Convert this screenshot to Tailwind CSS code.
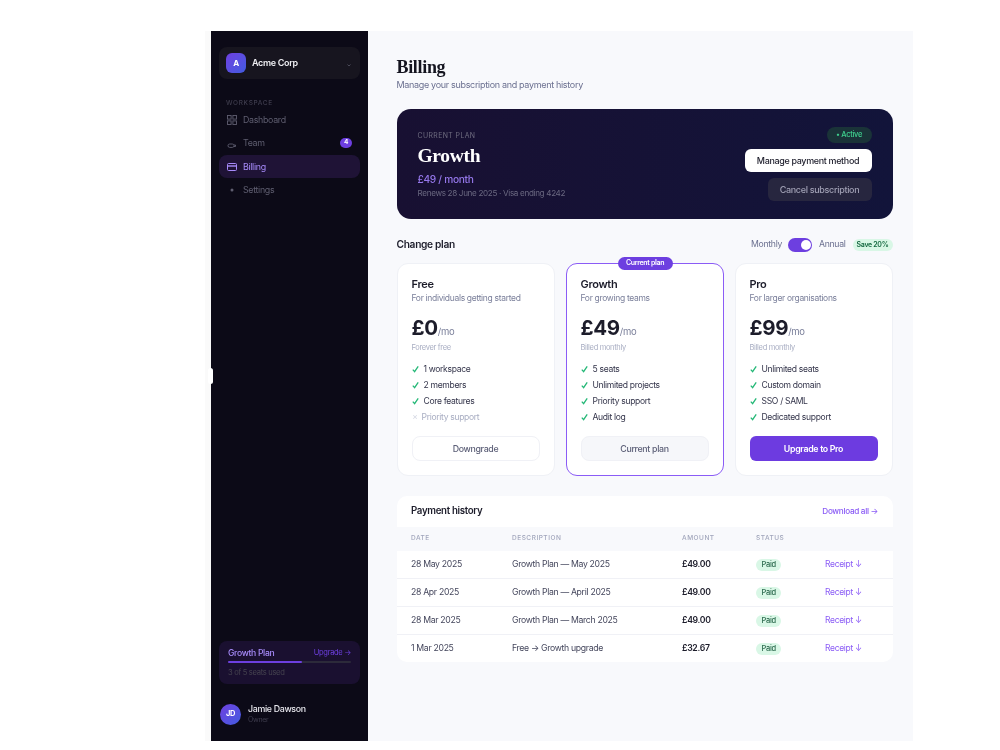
<!DOCTYPE html>
<html lang="en">
  <head>
    <meta charset="UTF-8" />
    <title>Billing</title>
    <script src="https://cdn.jsdelivr.net/npm/@tailwindcss/browser@4"></script>
  </head>
  <body class="bg-white font-['Inter',sans-serif] tracking-[-0.02em] overflow-hidden">
    <div class="w-[1000px] h-[750px] pt-[31px] pl-[205px]">
      <div class="relative flex w-[708px] h-[710px] bg-[#fafafa] pl-[6px] blur-[0.4px]">
        <div class="absolute left-[3px] top-[337px] w-[5px] h-[16px] bg-white rounded-sm"></div>

        <!-- Sidebar -->
        <aside class="w-[157px] shrink-0 bg-[#0c0a17] flex flex-col px-2 pt-4">
          <div class="h-[32px] rounded-lg bg-[#17151f] flex items-center px-[7px] gap-[6px]">
            <div class="w-[20px] h-[20px] rounded-md bg-gradient-to-br from-[#6d3fe0] to-[#3f5be0] text-white text-[8px] font-bold flex items-center justify-center">A</div>
            <span class="text-[9px] font-semibold text-[#eeeef2]">Acme Corp</span>
            <svg class="ml-auto mr-[1px] mt-1" width="6" height="6" viewBox="0 0 6 6" fill="none" stroke="#4a4a58" stroke-width="1"><path d="M1.5 2.5 3 4l1.5-1.5" /></svg>
          </div>

          <div class="mt-[20px] pl-[7px] text-[6.5px] tracking-[0.1em] text-[#3f3d4e] font-medium leading-[8px]">WORKSPACE</div>
          <nav class="mt-[1px] flex flex-col text-[8.85px] text-[#5f5e70]">
            <div class="h-[23px] flex items-center gap-[6px] pl-[8px]">
              <svg width="10" height="10" viewBox="0 0 10 10" fill="none" stroke="#5f5e70" stroke-width="0.9"><rect x="0.5" y="0.5" width="3.6" height="3.6" /><rect x="5.9" y="0.5" width="3.6" height="3.6" /><rect x="0.5" y="5.9" width="3.6" height="3.6" /><rect x="5.9" y="5.9" width="3.6" height="3.6" /></svg>
              Dashboard
            </div>
            <div class="h-[23px] flex items-center gap-[6px] pl-[8px] pr-[8px] mt-[0.5px]">
              <svg class="mt-1" width="10" height="10" viewBox="0 0 10 10" fill="none" stroke="#5f5e70" stroke-width="0.9"><rect x="1" y="4" width="6" height="3.4" rx="1.7" /><path d="M7 5h1.5v1.5H7" /></svg>
              Team
              <span class="ml-auto w-[12px] h-[10px] rounded-full bg-[#6d3fe0] text-white text-[6.5px] font-bold flex items-center justify-center">4</span>
            </div>
            <div class="h-[23px] flex items-center gap-[6px] pl-[8px] rounded-lg bg-[#1f1336] text-[#a78bfa] mt-[0.5px]">
              <svg width="10" height="10" viewBox="0 0 10 10" fill="none" stroke="#a78bfa" stroke-width="1"><rect x="0.5" y="1.5" width="9" height="7" rx="1" /><path d="M0.5 4h9" stroke-width="1.4" /></svg>
              Billing
            </div>
            <div class="h-[23px] flex items-center gap-[6px] pl-[8px] mt-[0.5px]">
              <svg width="10" height="10" viewBox="0 0 10 10" fill="none"><circle cx="5" cy="5" r="1.5" fill="#5f5e70" /></svg>
              Settings
            </div>
          </nav>

          <div class="mt-auto h-[43px] rounded-lg bg-[#1a1030] px-[9px] pt-[6px]">
            <div class="flex justify-between items-center leading-[12px]">
              <span class="text-[8.6px] font-medium text-[#a78bfa]">Growth Plan</span>
              <span class="text-[7.5px] text-[#6d3fe0]">Upgrade →</span>
            </div>
            <div class="mt-[2px] h-[2px] bg-[#2c2a3a] rounded-full">
              <div class="h-full w-[60%] bg-[#6d3fe0] rounded-full"></div>
            </div>
            <div class="mt-[5px] text-[7.6px] text-[#45434f] leading-[10px]">3 of 5 seats used</div>
          </div>
          <div class="h-[57px] pt-[3px] flex items-center gap-[7px] pl-[1px]">
            <div class="w-[21px] h-[21px] rounded-full bg-gradient-to-br from-[#6d3fe0] to-[#3f5be0] text-white text-[7.5px] font-bold flex items-center justify-center">JD</div>
            <div>
              <div class="text-[8.8px] font-medium text-[#e8e8ee] leading-[12px]">Jamie Dawson</div>
              <div class="text-[7px] text-[#3f3d4e] leading-[10px]">Owner</div>
            </div>
          </div>
        </aside>

        <!-- Main -->
        <main class="flex-1 bg-[#f8f9fc] pl-[28.5px] pr-[20.5px] pt-[25px]">
          <h1 class="font-['Liberation_Serif',serif] text-[18px] font-bold text-[#14141f] leading-[22px]">Billing</h1>
          <p class="text-[9px] text-[#6b7090] leading-[12px] mt-[1px]">Manage your subscription and payment history</p>

          <section class="mt-[18px] h-[110px] rounded-[14px] bg-gradient-to-r from-[#181032] to-[#12143a] flex justify-between pl-[21px] pr-[21px]">
            <div class="pt-[22px]">
              <div class="text-[6.9px] tracking-[0.06em] text-[#6f6d80] leading-[10px]">CURRENT PLAN</div>
              <div class="font-['Liberation_Serif',serif] text-[19.5px] font-bold text-white leading-[24px] mt-[3px]">Growth</div>
              <div class="text-[10.2px] font-medium text-[#9678ec] leading-[14px] mt-[4px]">£49 / month</div>
              <div class="text-[8.1px] text-[#6a6880] leading-[12px] mt-[1px]">Renews 28 June 2025 · Visa ending 4242</div>
            </div>
            <div class="flex flex-col items-end pt-[18px]">
              <div class="h-[16px] w-[45px] rounded-full bg-[#1a3338] text-[#3fcf8e] text-[7.5px] font-medium flex items-center justify-center">• Active</div>
              <button class="mt-[6px] h-[23px] w-[127px] rounded-md bg-white text-[#1c1c2a] text-[8.95px] font-medium">Manage payment method</button>
              <button class="mt-[6px] h-[23px] w-[104px] rounded-md bg-[#27263f] text-[#a0a0b4] text-[9px] font-medium">Cancel subscription</button>
            </div>
          </section>

          <div class="mt-[18px] h-[16px] flex items-center justify-between">
            <h2 class="text-[10.2px] font-semibold text-[#1c1c2a]">Change plan</h2>
            <div class="flex items-center text-[8.7px] text-[#6b7090]">
              <span>Monthly</span>
              <span class="relative w-[24px] h-[14px] rounded-full bg-[#6d3fe0] ml-[6px] mr-[7px]"><span class="absolute right-[1.5px] top-[2px] w-[10px] h-[10px] rounded-full bg-white"></span></span>
              <span>Annual</span>
              <span class="ml-[7px] h-[12px] w-[40px] rounded-full bg-[#d9f7e6] text-[#166a42] text-[7px] font-semibold flex items-center justify-center">Save 20%</span>
            </div>
          </div>

          <div class="mt-[10px] grid grid-cols-3 gap-[11px]">
            <!-- Free -->
            <article class="h-[213px] rounded-[11px] bg-white border border-[#eff1f6] px-[14px] pt-[13px]">
              <h3 class="text-[11px] font-semibold text-[#1c1c2a] leading-[14px]">Free</h3>
              <p class="text-[8.5px] text-[#7a7f9a] leading-[12px] mt-[1px]">For individuals getting started</p>
              <div class="mt-[11px] flex items-baseline h-[26px]"><span class="text-[20.5px] font-bold text-[#1c1c2a] leading-[26px]">£0</span><span class="text-[9.5px] text-[#7a7f9a]">/mo</span></div>
              <p class="text-[7.5px] text-[#a8adc2] leading-[10px] mt-[2px]">Forever free</p>
              <ul class="mt-[8px] flex flex-col text-[8.55px] text-[#33344a]">
                <li class="h-[16px] flex items-center gap-[4px]"><svg width="8" height="8" viewBox="0 0 8 8" fill="none" stroke="#25b877" stroke-width="1.3"><path d="M0.8 4.6 2.6 6.6 6.2 1.4" /></svg>1 workspace</li>
                <li class="h-[16px] flex items-center gap-[4px]"><svg width="8" height="8" viewBox="0 0 8 8" fill="none" stroke="#25b877" stroke-width="1.3"><path d="M0.8 4.6 2.6 6.6 6.2 1.4" /></svg>2 members</li>
                <li class="h-[16px] flex items-center gap-[4px]"><svg width="8" height="8" viewBox="0 0 8 8" fill="none" stroke="#25b877" stroke-width="1.3"><path d="M0.8 4.6 2.6 6.6 6.2 1.4" /></svg>Core features</li>
                <li class="h-[16px] flex items-center gap-[4px] text-[#a8adc2]"><span class="w-[6px] text-[#d5d8e3] text-[8px]">✗</span>Priority support</li>
              </ul>
              <button class="mt-[11px] w-full h-[25px] rounded-lg bg-white border border-[#f0f1f6] text-[#5d6078] text-[8.8px] font-medium">Downgrade</button>
            </article>

            <!-- Growth -->
            <article class="relative h-[213px] rounded-[11px] bg-white border border-[#8b5cf6] px-[14px] pt-[13px]">
              <span class="absolute -top-[7px] left-[51px] h-[12.5px] w-[55px] rounded-full bg-[#6d3fe0] text-white text-[7px] font-semibold flex items-center justify-center">Current plan</span>
              <h3 class="text-[11px] font-semibold text-[#1c1c2a] leading-[14px]">Growth</h3>
              <p class="text-[8.5px] text-[#7a7f9a] leading-[12px] mt-[1px]">For growing teams</p>
              <div class="mt-[11px] flex items-baseline h-[26px]"><span class="text-[20.5px] font-bold text-[#1c1c2a] leading-[26px]">£49</span><span class="text-[9.5px] text-[#7a7f9a]">/mo</span></div>
              <p class="text-[7.5px] text-[#a8adc2] leading-[10px] mt-[2px]">Billed monthly</p>
              <ul class="mt-[8px] flex flex-col text-[8.55px] text-[#33344a]">
                <li class="h-[16px] flex items-center gap-[4px]"><svg width="8" height="8" viewBox="0 0 8 8" fill="none" stroke="#25b877" stroke-width="1.3"><path d="M0.8 4.6 2.6 6.6 6.2 1.4" /></svg>5 seats</li>
                <li class="h-[16px] flex items-center gap-[4px]"><svg width="8" height="8" viewBox="0 0 8 8" fill="none" stroke="#25b877" stroke-width="1.3"><path d="M0.8 4.6 2.6 6.6 6.2 1.4" /></svg>Unlimited projects</li>
                <li class="h-[16px] flex items-center gap-[4px]"><svg width="8" height="8" viewBox="0 0 8 8" fill="none" stroke="#25b877" stroke-width="1.3"><path d="M0.8 4.6 2.6 6.6 6.2 1.4" /></svg>Priority support</li>
                <li class="h-[16px] flex items-center gap-[4px]"><svg width="8" height="8" viewBox="0 0 8 8" fill="none" stroke="#25b877" stroke-width="1.3"><path d="M0.8 4.6 2.6 6.6 6.2 1.4" /></svg>Audit log</li>
              </ul>
              <button class="mt-[11px] w-full h-[25px] rounded-lg bg-[#f6f7fa] border border-[#f0f1f6] text-[#5d6078] text-[8.8px] font-medium">Current plan</button>
            </article>

            <!-- Pro -->
            <article class="h-[213px] rounded-[11px] bg-white border border-[#eff1f6] px-[14px] pt-[13px]">
              <h3 class="text-[11px] font-semibold text-[#1c1c2a] leading-[14px]">Pro</h3>
              <p class="text-[8.5px] text-[#7a7f9a] leading-[12px] mt-[1px]">For larger organisations</p>
              <div class="mt-[11px] flex items-baseline h-[26px]"><span class="text-[20.5px] font-bold text-[#1c1c2a] leading-[26px]">£99</span><span class="text-[9.5px] text-[#7a7f9a]">/mo</span></div>
              <p class="text-[7.5px] text-[#a8adc2] leading-[10px] mt-[2px]">Billed monthly</p>
              <ul class="mt-[8px] flex flex-col text-[8.55px] text-[#33344a]">
                <li class="h-[16px] flex items-center gap-[4px]"><svg width="8" height="8" viewBox="0 0 8 8" fill="none" stroke="#25b877" stroke-width="1.3"><path d="M0.8 4.6 2.6 6.6 6.2 1.4" /></svg>Unlimited seats</li>
                <li class="h-[16px] flex items-center gap-[4px]"><svg width="8" height="8" viewBox="0 0 8 8" fill="none" stroke="#25b877" stroke-width="1.3"><path d="M0.8 4.6 2.6 6.6 6.2 1.4" /></svg>Custom domain</li>
                <li class="h-[16px] flex items-center gap-[4px]"><svg width="8" height="8" viewBox="0 0 8 8" fill="none" stroke="#25b877" stroke-width="1.3"><path d="M0.8 4.6 2.6 6.6 6.2 1.4" /></svg>SSO / SAML</li>
                <li class="h-[16px] flex items-center gap-[4px]"><svg width="8" height="8" viewBox="0 0 8 8" fill="none" stroke="#25b877" stroke-width="1.3"><path d="M0.8 4.6 2.6 6.6 6.2 1.4" /></svg>Dedicated support</li>
              </ul>
              <button class="mt-[11px] w-full h-[25px] rounded-md bg-[#6d3be0] text-white text-[8.8px] font-semibold">Upgrade to Pro</button>
            </article>
          </div>

          <!-- Payment history -->
          <section class="mt-[20px] h-[166px] rounded-[10px] bg-white overflow-hidden">
            <div class="h-[31px] flex items-center justify-between px-[14.5px]">
              <h2 class="text-[9.7px] font-semibold text-[#1c1c2a]">Payment history</h2>
              <span class="text-[8.2px] font-medium text-[#8b5cf6]">Download all →</span>
            </div>
            <div class="h-[24px] bg-[#f8f9fc] grid grid-cols-[101px_170px_74px_69px_1fr] items-center px-[14.5px] text-[6.5px] tracking-[0.08em] text-[#a0a5bb] font-medium">
              <span>DATE</span><span>DESCRIPTION</span><span>AMOUNT</span><span>STATUS</span><span></span>
            </div>
            <div class="h-[28px] grid grid-cols-[101px_170px_74px_69px_1fr] items-center px-[14.5px] text-[8.7px] text-[#44465c] border-b border-[#f0f1f6]">
              <span>28 May 2025</span><span>Growth Plan — May 2025</span><span class="font-semibold text-[#1c1c2a]">£49.00</span><span><span class="inline-flex h-[12px] px-[5.5px] rounded-full bg-[#d9f7e6] text-[#2d6b4f] text-[7.5px] font-medium items-center">Paid</span></span><span class="text-[8.5px] text-[#8b5cf6]">Receipt ↓</span>
            </div>
            <div class="h-[28px] grid grid-cols-[101px_170px_74px_69px_1fr] items-center px-[14.5px] text-[8.7px] text-[#44465c] border-b border-[#f0f1f6]">
              <span>28 Apr 2025</span><span>Growth Plan — April 2025</span><span class="font-semibold text-[#1c1c2a]">£49.00</span><span><span class="inline-flex h-[12px] px-[5.5px] rounded-full bg-[#d9f7e6] text-[#2d6b4f] text-[7.5px] font-medium items-center">Paid</span></span><span class="text-[8.5px] text-[#8b5cf6]">Receipt ↓</span>
            </div>
            <div class="h-[28px] grid grid-cols-[101px_170px_74px_69px_1fr] items-center px-[14.5px] text-[8.7px] text-[#44465c] border-b border-[#f0f1f6]">
              <span>28 Mar 2025</span><span>Growth Plan — March 2025</span><span class="font-semibold text-[#1c1c2a]">£49.00</span><span><span class="inline-flex h-[12px] px-[5.5px] rounded-full bg-[#d9f7e6] text-[#2d6b4f] text-[7.5px] font-medium items-center">Paid</span></span><span class="text-[8.5px] text-[#8b5cf6]">Receipt ↓</span>
            </div>
            <div class="h-[27px] grid grid-cols-[101px_170px_74px_69px_1fr] items-center px-[14.5px] text-[8.7px] text-[#44465c]">
              <span>1 Mar 2025</span><span>Free → Growth upgrade</span><span class="font-semibold text-[#1c1c2a]">£32.67</span><span><span class="inline-flex h-[12px] px-[5.5px] rounded-full bg-[#d9f7e6] text-[#2d6b4f] text-[7.5px] font-medium items-center">Paid</span></span><span class="text-[8.5px] text-[#8b5cf6]">Receipt ↓</span>
            </div>
          </section>
        </main>
      </div>
    </div>
  </body>
</html>
